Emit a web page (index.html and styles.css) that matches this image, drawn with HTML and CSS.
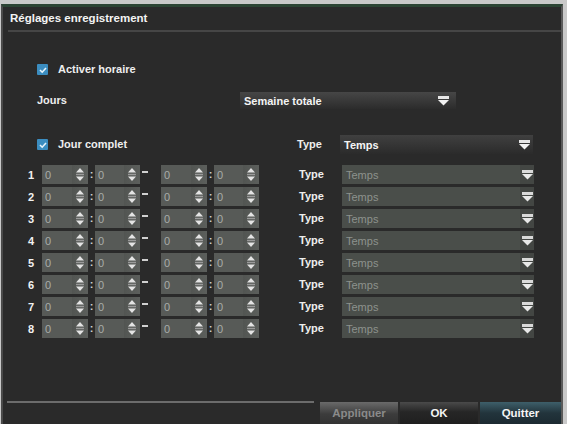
FILE: index.html
```html
<!DOCTYPE html>
<html lang="fr">
<head>
<meta charset="utf-8">
<title>Réglages enregistrement</title>
<link rel="stylesheet" href="styles.css">
</head>
<body>
<div class="window">
  <div class="title">Réglages enregistrement</div>
  <div class="content">
    <div class="check-row opt">
      <span class="cb"><svg viewBox="0 0 10 10" width="10" height="10"><path d="M2 5 L4.2 7.2 L8 3" fill="none" stroke="#e8f4fb" stroke-width="1.6"/></svg></span>
      <span class="lbl">Activer horaire</span>
    </div>
    <div class="days-row">
      <span class="lbl days-lbl">Jours</span>
      <div class="select dark wide"><span>Semaine totale</span><svg class="dd" viewBox="0 0 11 10" width="11" height="10"><rect x="0" y="0" width="11" height="3" fill="#e6e6e6"/><path d="M0 4 H11 L5.5 9.5 Z" fill="#f2f2f2"/></svg></div>
    </div>
    <div class="full-row">
      <div class="check-row">
        <span class="cb"><svg viewBox="0 0 10 10" width="10" height="10"><path d="M2 5 L4.2 7.2 L8 3" fill="none" stroke="#e8f4fb" stroke-width="1.6"/></svg></span>
        <span class="lbl">Jour complet</span>
      </div>
      <span class="lbl type-lbl">Type</span>
      <div class="select dark type"><span>Temps</span><svg class="dd" viewBox="0 0 11 10" width="11" height="10"><rect x="0" y="0" width="11" height="3" fill="#e6e6e6"/><path d="M0 4 H11 L5.5 9.5 Z" fill="#f2f2f2"/></svg></div>
    </div>
    <div class="rows" id="rows"></div>
  </div>
  <div class="footer">
    <div class="sep"></div>
    <div class="buttons">
      <div class="btn apply">Appliquer</div>
      <div class="btn ok">OK</div>
      <div class="btn quit">Quitter</div>
    </div>
  </div>
</div>
<script src="app.js"></script>
</body>
</html>
```
FILE: app.js
```js
(function () {
  var arrows = '<svg viewBox="0 0 10 15" width="10" height="15"><path d="M5 1 L9 5.5 H1 Z" fill="#e4e4e4"/><rect x="1" y="6.8" width="8" height="1.4" fill="#9a9a9a"/><path d="M1 9.5 H9 L5 14 Z" fill="#e4e4e4"/></svg>';
  var dd = '<svg class="dd" viewBox="0 0 11 10" width="11" height="10"><rect x="0" y="0" width="11" height="3" fill="#d8d8d8"/><path d="M0 4 H11 L5.5 9.5 Z" fill="#e8e8e8"/></svg>';
  function spin(cls) {
    return '<div class="spin ' + cls + '"><span class="v">0</span><span class="arr">' + arrows + '</span></div>';
  }
  var html = '';
  for (var i = 1; i <= 8; i++) {
    html += '<div class="trow">' +
      '<span class="num">' + i + '</span>' +
      spin('s1') + '<span class="colon">:</span>' + spin('s2') +
      '<span class="dash"></span>' +
      spin('s3') + '<span class="colon">:</span>' + spin('s4') +
      '<span class="lbl type-lbl">Type</span>' +
      '<div class="select dim type"><span>Temps</span><span class="ddbox">' + dd + '</span></div>' +
      '</div>';
  }
  document.getElementById('rows').innerHTML = html;
})();
```
FILE: styles.css
```css
html, body {
  margin: 0;
  padding: 0;
}
body {
  background: #c9c9c9;
  width: 567px;
  height: 424px;
  overflow: hidden;
  font-family: "Liberation Sans", Arial, sans-serif;
  color: #f2f2f2;
}
.window {
  box-sizing: border-box;
  margin: 4px 0 0 1px;
  width: 562px;
  height: 420px;
  background: #2a2a2a;
  border-top: 3px solid #2c4434;
  border-left: 2px solid #4a4a4a;
  border-right: 2px solid #5a5a5a;
  display: flex;
  flex-direction: column;
}
.title {
  height: 19px;
  margin: 0 0 0 5px;
  padding: 4px 0 0 2px;
  font-size: 11.5px;
  font-weight: bold;
  line-height: 14px;
  border-bottom: 2px solid #464646;
  color: #f4f4f4;
}
.content {
  padding-left: 34px;
  display: flex;
  flex-direction: column;
}
.lbl {
  font-size: 11px;
  font-weight: bold;
  color: #eeeeee;
  line-height: 13px;
}
.check-row {
  display: flex;
  align-items: center;
  gap: 10px;
}
.opt {
  margin-top: 31px;
}
.cb {
  width: 11px;
  height: 11px;
  background: #3b8dc0;
  display: flex;
  align-items: center;
  justify-content: center;
  border-radius: 1px;
}
.days-row {
  display: flex;
  align-items: center;
  margin-top: 16px;
}
.days-lbl {
  width: 203px;
}
.select {
  box-sizing: border-box;
  display: flex;
  align-items: center;
  justify-content: space-between;
  font-size: 11px;
  font-weight: bold;
  padding-left: 4px;
}
.select.dark {
  background: linear-gradient(#464646, #2c2c2c);
  color: #f4f4f4;
}
.select.wide {
  width: 216px;
  height: 17px;
  padding-right: 7px;
}
.full-row {
  display: flex;
  align-items: center;
  margin-top: 26px;
}
.full-row .check-row {
  width: 260px;
}
.type-lbl {
  width: 43px;
}
.select.type {
  width: 193px;
  height: 19px;
}
.select.dark.type {
  padding-right: 3px;
  background: linear-gradient(#404040, #2b2b2b);
}
.rows {
  margin-top: 11px;
  display: flex;
  flex-direction: column;
  gap: 3px;
}
.trow {
  display: flex;
  align-items: center;
  height: 19px;
  margin-left: -9px;
}
.num {
  width: 14px;
  font-size: 11px;
  font-weight: bold;
  text-align: left;
}
.spin {
  box-sizing: border-box;
  height: 19px;
  background: #575a57;
  display: flex;
  align-items: center;
  justify-content: space-between;
  padding-left: 3px;
}
.spin .v {
  font-size: 11px;
  color: #a8aca8;
}
.spin .arr {
  width: 16px;
  height: 19px;
  display: flex;
  align-items: center;
  justify-content: center;
  background: linear-gradient(90deg, #525552, #5c5f5c);
}
.s1, .s3 { width: 46px; }
.s2, .s4 { width: 45px; }
.colon {
  width: 7px;
  text-align: center;
  font-size: 11px;
  font-weight: bold;
  color: #cfcfcf;
  line-height: 11px;
}
.dash {
  width: 21px;
  height: 4px;
  align-self: center;
  margin-top: -4px;
}
.dash::before {
  content: "";
  display: block;
  margin-left: 2px;
  width: 6px;
  height: 2px;
  background: #d0d0d0;
}
.trow .type-lbl {
  margin-left: 40px;
}
.select.dim {
  width: 192px;
  background: #4a4e4a;
  color: #8d928d;
  font-weight: normal;
  padding-right: 0;
}
.ddbox {
  width: 14px;
  height: 19px;
  background: #434643;
  display: flex;
  align-items: center;
  justify-content: center;
}
.footer {
  margin-top: auto;
  display: flex;
  align-items: flex-start;
  height: 23px;
}
.sep {
  flex: 1;
  margin-left: 4px;
  height: 2px;
  background: #6c6c6c;
}
.buttons {
  display: flex;
  gap: 2px;
  margin-left: 6px;
  padding-top: 1px;
}
.btn {
  height: 22px;
  display: flex;
  align-items: center;
  justify-content: center;
  font-size: 11.5px;
  font-weight: bold;
}
.apply {
  width: 78px;
  background: linear-gradient(#6a6a6a, #3c3c3c 55%, #333333);
  color: #8a8a8a;
}
.ok {
  width: 78px;
  background: linear-gradient(#4a4a4a, #262626 45%, #1f1f1f);
  color: #f4f4f4;
}
.quit {
  width: 81px;
  background: linear-gradient(#3e5f6a, #22343c 50%, #1c2a31);
  color: #f4f4f4;
}
```
